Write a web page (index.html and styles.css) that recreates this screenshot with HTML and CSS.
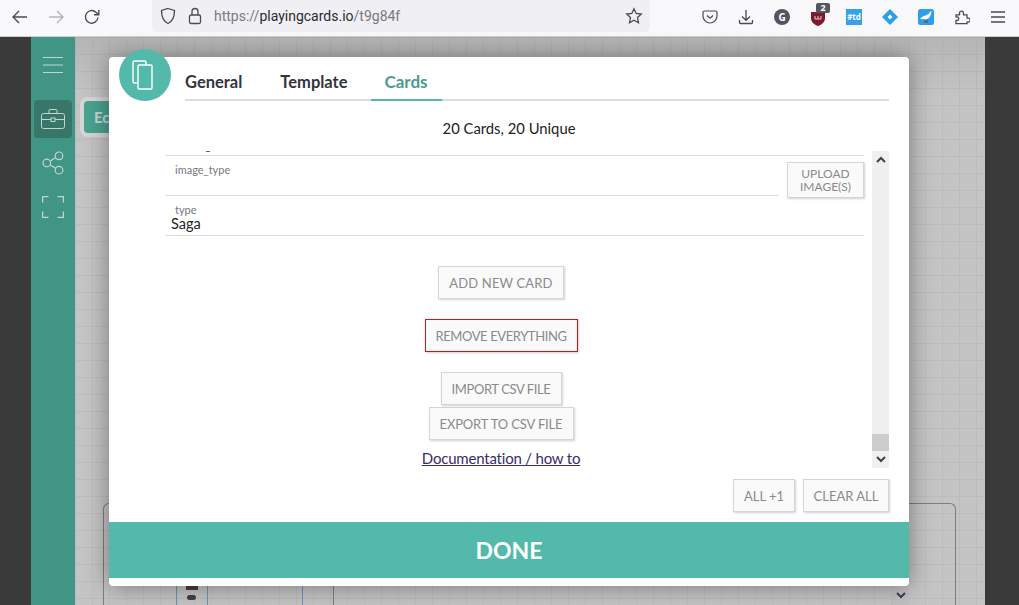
FILE: index.html
```html
<!DOCTYPE html>
<html lang="en">
<head>
<meta charset="UTF-8">
<meta name="viewport" content="width=device-width, initial-scale=1.0">
<title>playingcards.io</title>
<link rel="stylesheet" href="styles.css">
</head>
<body>

<header class="toolbar">
    <nav class="navButtons">
        <span class="toolIcon">
            <svg width="18" height="18" viewBox="0 0 18 18" fill="none" stroke="#4a4a50" stroke-width="1.4"><path d="M16 9H2M8 3 2 9l6 6"/></svg>
        </span>
        <span class="toolIcon">
            <svg width="18" height="18" viewBox="0 0 18 18" fill="none" stroke="#b5b5b8" stroke-width="1.4"><path d="M2 9h14M10 3l6 6-6 6"/></svg>
        </span>
        <span class="toolIcon">
            <svg width="18" height="18" viewBox="0 0 18 18" fill="none" stroke="#4a4a50" stroke-width="1.4"><path d="M15 9.5A6.3 6.3 0 1 1 13.2 4.4L15.5 6.5"/><path d="M15.8 2v4.8h-4.8"/></svg>
        </span>
    </nav>
    <div class="urlBar">
        <svg class="urlShield" width="16" height="18" viewBox="0 0 16 18" fill="none" stroke="#4a4a50" stroke-width="1.3"><path d="M8 1.5 14.5 3.5C14.5 10 12.5 14.5 8 16.5 3.5 14.5 1.5 10 1.5 3.5Z"/></svg>
        <svg class="urlLock" width="14" height="18" viewBox="0 0 14 18" fill="none" stroke="#4a4a50" stroke-width="1.3"><rect x="1.5" y="8" width="11" height="8.5" rx="1.5"/><path d="M4 8V4.5a3 3 0 0 1 6 0V8"/></svg>
        <span class="urlText">https://<b>playingcards.io</b>/t9g84f</span>
        <svg class="urlStar" width="18" height="18" viewBox="0 0 18 18" fill="none" stroke="#4a4a50" stroke-width="1.3"><path d="M9 1.8 11.2 6.5 16.3 7.1 12.5 10.6 13.5 15.7 9 13.2 4.5 15.7 5.5 10.6 1.7 7.1 6.8 6.5Z"/></svg>
    </div>
    <div class="extensions">
        <span class="toolIcon">
            <svg width="16" height="16" viewBox="0 0 16 16" fill="none" stroke="#4a4a50" stroke-width="1.2"><path d="M2.5 2h11A1.5 1.5 0 0 1 15 3.5V7A7 7 0 0 1 1 7V3.5A1.5 1.5 0 0 1 2.5 2Z"/><path d="M5 6.5 8 9.3 11 6.5"/></svg>
        </span>
        <span class="toolIcon">
            <svg width="16" height="16" viewBox="0 0 16 16" fill="none" stroke="#4a4a50" stroke-width="1.3"><path d="M8 1v10M4 7.5 8 11.3 12 7.5M1.5 11v2.5a1 1 0 0 0 1 1h11a1 1 0 0 0 1-1V11"/></svg>
        </span>
        <span class="toolIcon"><span class="extG">G</span></span>
        <span class="toolIcon">
            <span class="extShield">
                <svg width="14" height="15" viewBox="0 0 14 15"><path d="M0 1h14v6c0 4-3 6.5-7 8C3 13.5 0 11 0 7Z" fill="#80192f"/><path d="M4 5v3h3V5M7 8h3V5" fill="none" stroke="#e8c9cf" stroke-width="1"/></svg>
                <span class="extCount">2</span>
            </span>
        </span>
        <span class="toolIcon"><span class="extTd">#td</span></span>
        <span class="toolIcon">
            <svg width="16" height="16" viewBox="0 0 16 16"><path d="M8 0 16 8 8 16 0 8Z" fill="#2d9ee8"/><rect x="6.3" y="6.3" width="3.4" height="3.4" fill="#fff" transform="rotate(45 8 8)"/></svg>
        </span>
        <span class="toolIcon">
            <svg width="16" height="16" viewBox="0 0 16 16"><rect width="16" height="16" rx="2.5" fill="#2fa0e8"/><path d="M2 10C5 6 9 7 11 4.5 11.5 3.5 12 2.5 13 2.5L14.500 2.800 13 3.500C13 7 11 10 8 10.500Z" fill="#fff"/><path d="M7 10.500V14M9 10.500V14" stroke="#2c5f4a" stroke-width="1"/></svg>
        </span>
        <span class="toolIcon">
            <svg width="16" height="16" viewBox="0 0 16 16" fill="none" stroke="#4a4a50" stroke-width="1.3"><path d="M1 6.200h3.500V4.500a2 2 0 0 1 4 0v1.700H12v3.300h1.200a2 2 0 0 1 0 4H12V15H1v-3.200h1a1.800 1.800 0 0 0 0-3.600H1Z" transform="translate(1 -.3)"/></svg>
        </span>
        <span class="toolIcon">
            <svg width="16" height="16" viewBox="0 0 16 16" fill="none" stroke="#4a4a50" stroke-width="1.3"><path d="M1 3h14M1 8h14M1 13h14"/></svg>
        </span>
    </div>
</header>

<div class="app">
    <div class="darkLeft"></div>
    <aside class="sidebar">
        <span class="sideIcon">
            <svg width="20" height="16" viewBox="0 0 20 16" fill="none" stroke="#c4d6d1" stroke-width="1"><path d="M0 .5h20M0 8h20M0 15.500h20"/></svg>
        </span>
        <span class="sideIcon sideIconActive">
            <svg width="24" height="20" viewBox="0 0 24 20" fill="none" stroke="#c4d6d1" stroke-width="1"><rect x=".5" y="4.500" width="23" height="15" rx="2"/><path d="M8 4.500V1.500a1 1 0 0 1 1-1h6a1 1 0 0 1 1 1v3M.5 10.500H10M14 10.500h9.500"/><rect x="10" y="9" width="4" height="3.500"/></svg>
        </span>
        <span class="sideIcon">
            <svg width="22" height="24" viewBox="0 0 22 24" fill="none" stroke="#c4d6d1" stroke-width="1.2"><circle cx="4.800" cy="12" r="3.800"/><circle cx="17" cy="4.800" r="3.800"/><circle cx="17" cy="19.200" r="3.800"/><path d="M8.200 10 13.600 6.800M8.200 14 13.600 17.200"/></svg>
        </span>
        <span class="sideIcon">
            <svg width="22" height="22" viewBox="0 0 22 22" fill="none" stroke="#c4d6d1" stroke-width="1.2"><path d="M.6 6.500V.6H6.500M15.500.6h5.900V6.500M21.400 15.500v5.900H15.500M6.500 21.400H.6V15.500"/></svg>
        </span>
    </aside>

    <main class="canvas">
        <div class="board"></div>
        <div class="boardLine boardLine1"></div>
        <div class="boardLine boardLine2"></div>
        <div class="boardLine boardLine3"></div>
        <div class="boardLine boardLine4"></div>
        <div class="boardToken boardToken1"></div>
        <div class="boardToken boardToken2"></div>
        <div class="editChip"><span>Ec</span></div>
        <div class="boardScroll">
            <svg width="10" height="7" viewBox="0 0 10 7" fill="none" stroke="#3e3e52" stroke-width="2"><path d="M1 1 5 5 9 1"/></svg>
        </div>

        <section class="modal">
            <div class="modalBadge">
                <svg width="26" height="30" viewBox="0 0 26 30" fill="none" stroke="#fff" stroke-width="1.4"><rect x="1" y="1" width="13" height="22" rx="1.5"/><rect x="6" y="5" width="14" height="24" rx="1" fill="#53baab"/></svg>
            </div>

            <div class="tabs">
                <span class="tab">General</span>
                <span class="tab">Template</span>
                <span class="tab tabActive">Cards</span>
            </div>

            <h2 class="cardCount">20 Cards, 20 Unique</h2>

            <div class="scrollArea">
                <div class="scrollContent">
                    <div class="fieldCut"><span class="fieldCutMark"></span></div>
                    <div class="imageRow">
                        <div class="field">
                            <label>image_type</label>
                        </div>
                        <button class="btn btnUpload">UPLOAD IMAGE(S)</button>
                    </div>
                    <div class="field">
                        <label>type</label>
                        <div class="fieldValue">Saga</div>
                    </div>

                    <div class="actionGroup">
                        <button class="btn btnAdd">ADD NEW CARD</button>
                        <button class="btn btnDanger">REMOVE EVERYTHING</button>
                        <div class="csvButtons">
                            <button class="btn btnImport">IMPORT CSV FILE</button>
                            <button class="btn btnExport">EXPORT TO CSV FILE</button>
                        </div>
                        <a class="docLink" href="#">Documentation / how to</a>
                    </div>
                </div>
                <div class="scrollBar">
                    <span class="scrollArrow">
                        <svg width="10" height="7" viewBox="0 0 10 7" fill="none" stroke="#3e3e52" stroke-width="2"><path d="M1 6 5 2 9 6"/></svg>
                    </span>
                    <span class="scrollTrack"><span class="scrollThumb"></span></span>
                    <span class="scrollArrow">
                        <svg width="10" height="7" viewBox="0 0 10 7" fill="none" stroke="#3e3e52" stroke-width="2"><path d="M1 1 5 5 9 1"/></svg>
                    </span>
                </div>
            </div>

            <div class="modalActions">
                <button class="btn btnAllPlus">ALL +1</button>
                <button class="btn btnClear">CLEAR ALL</button>
            </div>

            <button class="doneButton">DONE</button>
        </section>
    </main>
    <div class="darkRight"></div>
</div>

</body>
</html>
```

FILE: styles.css
```css
* {
    box-sizing: border-box;
}

html, body {
    height: 100%;
    margin: 0;
    overflow: hidden;
}

body {
    display: flex;
    flex-direction: column;
    font-family: Lato, "Open Sans", sans-serif;
}

/* browser chrome */
.toolbar {
    display: flex;
    align-items: flex-start;
    height: 37px;
    padding-left: 2px;
    background-color: #f9f9fb;
    border-bottom: 1px solid #cfcfd3;
}

.navButtons {
    display: flex;
    width: 150px;
}

.toolIcon {
    display: flex;
    align-items: center;
    justify-content: center;
    width: 36px;
    height: 33px;
}

.urlBar {
    display: flex;
    align-items: center;
    width: 498px;
    height: 32px;
    padding: 0 7px 0 8px;
    background-color: #f0f0f4;
    border-radius: 0 0 6px 6px;
}

.urlShield {
    margin-right: 12px;
}

.urlLock {
    margin-right: 12px;
}

.urlText {
    flex: 1;
    font-family: Roboto, "Open Sans", sans-serif;
    font-size: 14px;
    color: #7a7a80;
}

.urlText b {
    font-weight: 400;
    color: #2b2b30;
}

.extensions {
    display: flex;
    margin-left: auto;
    margin-right: 3px;
}

.extG {
    display: flex;
    align-items: center;
    justify-content: center;
    width: 16px;
    height: 16px;
    border-radius: 50%;
    background-color: #54545e;
    color: #fff;
    font-family: "Open Sans", sans-serif;
    font-size: 10px;
    font-weight: 700;
}

.extShield {
    position: relative;
    display: block;
    width: 14px;
    height: 15px;
    margin-top: 1px;
}

.extCount {
    position: absolute;
    top: -7px;
    left: 5px;
    width: 14px;
    height: 10px;
    background-color: #565660;
    border-radius: 2px;
    color: #fff;
    font-family: "Open Sans", sans-serif;
    font-size: 9px;
    font-weight: 700;
    line-height: 10px;
    text-align: center;
}

.extTd {
    display: block;
    width: 16px;
    height: 16px;
    background-color: #35a2e6;
    color: #fff;
    font-family: "Open Sans", sans-serif;
    font-size: 8px;
    font-weight: 700;
    line-height: 16px;
    text-align: center;
}

/* app */
.app {
    display: flex;
    flex: 1;
    min-height: 0;
}

.darkLeft {
    width: 31px;
    background-color: #3a3a3a;
}

.darkRight {
    width: 34px;
    background-color: #3a3a3a;
}

.sidebar {
    display: flex;
    flex-direction: column;
    align-items: center;
    width: 44px;
    padding-top: 9px;
    background-color: #409585;
}

.sideIcon {
    display: flex;
    align-items: center;
    justify-content: center;
    width: 38px;
    height: 38px;
    margin-bottom: 6px;
    border-radius: 4px;
}

.sideIconActive {
    background-color: #387669;
}

.sidebar .sideIcon:first-child {
    margin-bottom: 16px;
}

.canvas {
    position: relative;
    flex: 1;
    background-color: #c4c4c4;
    background-image:
        linear-gradient(to bottom, rgba(0, 0, 0, .08), rgba(0, 0, 0, 0) 60px),
        linear-gradient(#bcbcbc 1px, transparent 1px),
        linear-gradient(90deg, #bcbcbc 1px, transparent 1px);
    background-size: 100% 100%, 17px 17px, 17px 17px;
}

.board {
    position: absolute;
    left: 28px;
    top: 466px;
    width: 853px;
    height: 120px;
    border: 1px solid #7d7d85;
    border-bottom: none;
    border-radius: 6px 6px 0 0;
}

.boardLine {
    position: absolute;
    top: 540px;
    bottom: 0;
    width: 1px;
    background-color: #6f93c0;
}

.boardLine1 {
    left: 101px;
}

.boardLine2 {
    left: 132px;
}

.boardLine3 {
    left: 227px;
}

.boardLine4 {
    left: 258px;
    background-color: #7d7d85;
}

.boardToken {
    position: absolute;
    left: 111px;
    width: 12px;
    background-color: #4a3c48;
}

.boardToken1 {
    top: 549px;
    height: 4px;
}

.boardToken2 {
    top: 558px;
    height: 5px;
    width: 9px;
    left: 112px;
    border-radius: 3px;
}

.editChip {
    position: absolute;
    left: 5px;
    top: 60px;
    width: 60px;
    height: 40px;
    padding: 4px;
    background-color: #d6d6d6;
    border-radius: 8px;
}

.editChip span {
    display: block;
    height: 32px;
    padding-left: 10px;
    background-color: #4aa391;
    border-radius: 4px;
    color: #c8d8d4;
    font-size: 15px;
    font-weight: 700;
    line-height: 32px;
}

.boardScroll {
    position: absolute;
    left: 817px;
    top: 549px;
    display: flex;
    align-items: center;
    justify-content: center;
    width: 17px;
    height: 19px;
    background-color: #c0c0c0;
}

/* modal */
.modal {
    position: absolute;
    left: 34px;
    top: 20px;
    display: flex;
    flex-direction: column;
    width: 800px;
    height: 529px;
    background-color: #fff;
    border-radius: 4px;
    box-shadow: 0 0 24px rgba(0, 0, 0, .4);
}

.modalBadge {
    position: absolute;
    left: 10px;
    top: -8px;
    display: flex;
    align-items: center;
    justify-content: center;
    width: 52px;
    height: 52px;
    background-color: #53baab;
    border-radius: 50%;
}

.tabs {
    display: flex;
    align-items: flex-end;
    height: 44px;
    margin: 0 20px 0 76px;
    border-bottom: 2px solid #dddddd;
}

.tab {
    margin-bottom: -2px;
    padding: 0 0 6px;
    border-bottom: 2px solid transparent;
    font-size: 16.5px;
    font-weight: 700;
    line-height: 22px;
    color: #333340;
}

.tab:first-child {
    margin-right: 38px;
}

.tab:nth-child(2) {
    margin-right: 23px;
}

.tabActive {
    width: 71px;
    color: #4a9c90;
    font-size: 17px;
    text-align: center;
    border-bottom-color: #53baab;
}

.cardCount {
    margin: 17px 0 0;
    font-size: 14.8px;
    font-weight: 400;
    line-height: 20px;
    color: #222;
    text-align: center;
}

.scrollArea {
    display: flex;
    height: 317px;
    margin: 13px 20px 0 56px;
    overflow: hidden;
}

.scrollContent {
    flex: 1;
    margin-right: 8px;
}

.fieldCut {
    height: 5px;
    padding-left: 41px;
    border-bottom: 1px solid #dddddd;
}

.fieldCutMark {
    display: block;
    width: 4px;
    height: 1px;
    background-color: #666;
}

.imageRow {
    display: flex;
    align-items: flex-start;
    gap: 8px;
    height: 40px;
}

.field {
    flex: 1;
    height: 40px;
    padding-top: 7px;
    border-bottom: 1px solid #dddddd;
}

.field label {
    display: block;
    padding-left: 10px;
    font-size: 11px;
    line-height: 13px;
    color: #77777f;
}

.fieldValue {
    margin-top: -1px;
    padding-left: 6px;
    font-size: 14.5px;
    line-height: 18px;
    color: #222;
}

.btn {
    height: 33px;
    padding: 0;
    background-color: #fafafa;
    border: 1px solid #d5d5d5;
    box-shadow: 1px 1px 2px rgba(0, 0, 0, .18);
    color: #8a8a8a;
    font-family: Lato, "Open Sans", sans-serif;
    font-size: 13px;
    white-space: nowrap;
}

.btnUpload {
    width: 77px;
    height: 36px;
    margin-top: 6px;
    padding: 0 4px;
    font-size: 12px;
    line-height: 13px;
    white-space: normal;
}

.btnAdd {
    width: 126px;
    letter-spacing: .15px;
}

.btnDanger {
    width: 153px;
    border: 1px solid #e00b1c;
    letter-spacing: -.4px;
}

.btnImport {
    width: 121px;
    letter-spacing: -.4px;
}

.btnExport {
    width: 145px;
    letter-spacing: -.15px;
}

.btnAllPlus {
    width: 62px;
}

.btnClear {
    width: 86px;
}

.actionGroup {
    display: flex;
    flex-direction: column;
    align-items: center;
    padding: 30px 27px 0 0;
}

.actionGroup .btn {
    margin-bottom: 20px;
}

.csvButtons {
    display: flex;
    flex-direction: column;
    align-items: center;
    gap: 2px;
}

.csvButtons .btn {
    margin-bottom: 0;
}

.docLink {
    margin-top: 9px;
    font-size: 15px;
    letter-spacing: -.2px;
    line-height: 18px;
    color: #3b2a6d;
}

.scrollBar {
    display: flex;
    flex-direction: column;
    width: 17px;
    background-color: #f0f0f0;
}

.scrollArrow {
    display: flex;
    align-items: center;
    justify-content: center;
    height: 17px;
}

.scrollTrack {
    position: relative;
    flex: 1;
}

.scrollThumb {
    position: absolute;
    left: 0;
    right: 0;
    bottom: 0;
    height: 17px;
    background-color: #cdcdcd;
}

.modalActions {
    display: flex;
    justify-content: flex-end;
    gap: 8px;
    margin: 11px 20px 0 0;
}

.doneButton {
    display: block;
    width: 100%;
    height: 56px;
    margin-top: 10px;
    background-color: #53baab;
    border: none;
    color: #fff;
    font-family: Lato, "Open Sans", sans-serif;
    font-size: 23px;
    font-weight: 700;
}
```
